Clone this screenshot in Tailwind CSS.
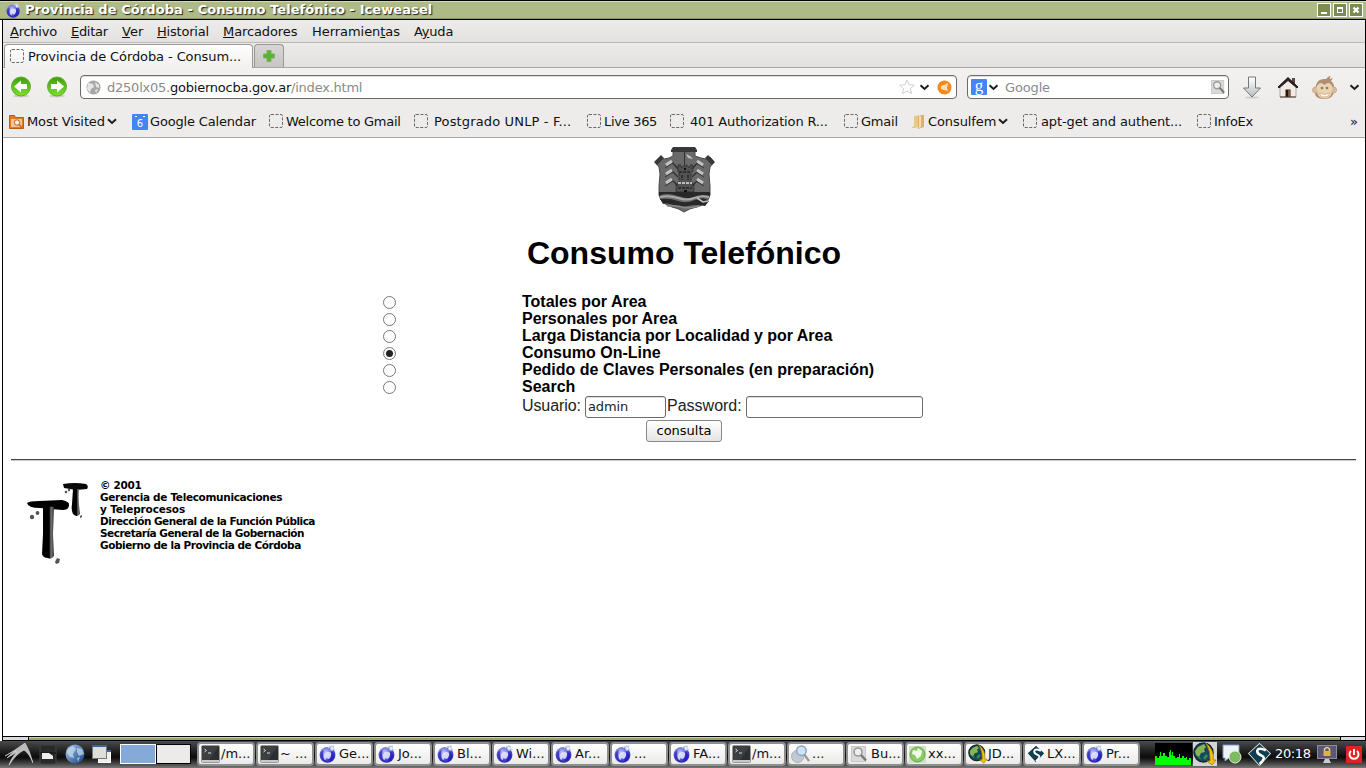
<!DOCTYPE html>
<html lang="es">
<head>
<meta charset="utf-8">
<title>Provincia de Córdoba - Consumo Telefónico</title>
<script src="https://cdn.jsdelivr.net/npm/@tailwindcss/browser@4"></script>
</head>
<body class="w-[1366px] h-[768px] overflow-hidden bg-white text-[#111] font-['DejaVu_Sans',sans-serif] text-[13px] leading-4">
<svg class="absolute h-0 w-0">
  <defs>
    <radialGradient id="gBlue" cx=".4" cy=".35" r=".65"><stop offset="0" stop-color="#c4c8fa"/><stop offset=".5" stop-color="#6e72dc"/><stop offset="1" stop-color="#2a28b4"/></radialGradient>
    <linearGradient id="gGreen" x1="0" x2="0" y1="0" y2="1"><stop offset="0" stop-color="#3f9d0b"/><stop offset="1" stop-color="#7ee02e"/></linearGradient>
    <linearGradient id="gSky" x1="0" x2="1" y1="0" y2="1"><stop offset="0" stop-color="#a9cdf0"/><stop offset="1" stop-color="#123f80"/></linearGradient>
    <linearGradient id="gDown" x1="0" x2="0" y1="0" y2="1"><stop offset="0" stop-color="#fff"/><stop offset="1" stop-color="#b4c0c4"/></linearGradient>
    <linearGradient id="gBrush" x1="0" x2="1" y1="0" y2="0"><stop offset="0" stop-color="#000"/><stop offset=".6" stop-color="#000"/><stop offset=".75" stop-color="#777"/><stop offset="1" stop-color="#333"/></linearGradient>
  </defs>
  <symbol id="weasel" viewBox="0 0 18 18">
    <circle cx="8.500" cy="9.800" r="7.900" fill="url(#gBlue)"/>
    <path d="M1.500 12q-1-5 3-7-1 4 0 9 2 2 5 3-6 0-8-5z" fill="#2722b8" opacity=".7"/>
    <path d="M4.500 11q1-4 5-4 3 0 3 3l-1 2q-1 2-2 2l-2-1-1 2q-2-1-2-4z" fill="#ececff" opacity=".8"/><path d="M12 6q4 2 3 7l-3 3q-2-1-3-1 4-2 3-9z" fill="#2018c0" opacity=".75"/>
    <path d="M9 3q2-2.200 6-1.500M12 5q3-1 4 0" stroke="#c5d0e6" stroke-width="1.500" fill="none"/><circle cx="13" cy="3.400" r="1.700" fill="#eef4ff" stroke="#b0bdd8" stroke-width=".6"/>
  </symbol>
  <symbol id="term" viewBox="0 0 20 18">
    <rect x=".5" y=".5" width="18" height="17" rx="1" fill="#c9c9c9" stroke="#999"/><rect x="1" y="1" width="17" height="14" fill="#2c2f30"/><path d="M1 1h17L8 15H1z" fill="#4a4d4e" opacity=".6"/>
    <path d="M3.500 4l2 1.500-2 1.500M7 8h3" stroke="#ddd" fill="none"/>
  </symbol>
  <symbol id="chev" viewBox="0 0 10 7"><path d="M1 1.300l4 3.700 4-3.700" stroke="#1c1c1c" stroke-width="2" fill="none"/></symbol>
  <symbol id="blank" viewBox="0 0 15 15"><rect x=".5" y=".5" width="13" height="13" rx="1.500" fill="none" stroke="#6a6a6a" stroke-dasharray="3 1.500"/></symbol>
  <symbol id="earth" viewBox="0 0 24 24">
    <circle cx="10.500" cy="10.500" r="9.500" fill="#164760"/>
    <path d="M5 5l6-3 2 3-2 2 1 3-4 1-2 4-3-2-1-4z" fill="#8ab552"/><path d="M3 13l4 2 1 3M13 12l2 2-3 4-2-2z" fill="#3c8b41"/><circle cx="10.500" cy="10.500" r="9.500" fill="none" stroke="#102a2c" stroke-width="1.500"/>
    <path d="M13 1q9 8 7 17h3l-4 5-5-4h3q1-9-4-18z" fill="#f6c313" stroke="#a37809" stroke-width=".8"/>
  </symbol>
  <symbol id="lx" viewBox="0 0 22 22">
    <path d="M11 1l10 9-10 11L1 10z" fill="#123d4e"/><path d="M17 7q-7-3-8 0t4 5-2 8" stroke="#fff" stroke-width="2.400" fill="none"/>
  </symbol>
  <symbol id="mag" viewBox="0 0 16 16">
    <rect x=".5" y=".5" width="14" height="15" fill="#dadada" stroke="#c8c8c8"/><circle cx="7" cy="6" r="4" fill="#eee" stroke="#9a9a9a" stroke-width="1.600"/><path d="M10 9l5 5.500" stroke="#777" stroke-width="2.400"/>
  </symbol>
</svg>

<div class="flex h-[741px] flex-col">
 <div class="flex h-[737px] flex-col">
  <!-- title bar -->
  <header class="flex h-5 w-full shrink-0 items-center border-y border-black bg-[#afbb86] pl-[6px] pr-[1px] shadow-[inset_0_1px_#d3dcae,inset_0_-1px_#8b9665]">
    <svg class="h-[15px] w-[15px]"><use href="#weasel"/></svg>
    <h1 class="ml-[4px] flex-1 whitespace-nowrap text-[13px] font-bold leading-[18px] tracking-[0.08px] text-white [text-shadow:1px_1px_1px_#222]">Provincia de Córdoba - Consumo Telefónico - Iceweasel</h1>
    <div class="flex gap-[2px] pr-[2px]">
      <svg class="h-[14px] w-[14px]" viewBox="0 0 14 14"><rect x=".5" y=".5" width="13" height="13" fill="#7c8a54" stroke="#fff"/><path d="M4 9h6v2H4z" fill="#fff"/></svg>
      <svg class="h-[14px] w-[14px]" viewBox="0 0 14 14"><rect x=".5" y=".5" width="13" height="13" fill="#7c8a54" stroke="#fff"/><path d="M4 4h6v6H4zM5 6v3h4V6z" fill="#fff" fill-rule="evenodd"/></svg>
      <svg class="h-[14px] w-[14px]" viewBox="0 0 14 14"><rect x=".5" y=".5" width="13" height="13" fill="#7c8a54" stroke="#fff"/><path d="M4.500 4.500l5 5M9.500 4.500l-5 5" stroke="#fff" stroke-width="2.200"/></svg>
    </div>
  </header>

  <div class="ml-[2px] flex flex-1 flex-col border-l border-r border-b border-black">
    <nav class="flex h-[23px] shrink-0 items-center border-b border-[#bcbab8] bg-linear-to-b from-[#edeceb] to-[#e3e2e0] pl-[7px] pt-[2px] whitespace-nowrap">
      <span class="w-[61px] tracking-[-0.25px]"><u>A</u>rchivo</span><span class="w-[51px] tracking-[-0.3px]"><u>E</u>ditar</span><span class="w-[35px]"><u>V</u>er</span><span class="w-[66px] tracking-[-0.2px]"><u>H</u>istorial</span><span class="w-[89px] tracking-[-0.1px]"><u>M</u>arcadores</span><span class="w-[102px] tracking-[-0.05px]">Herramien<u>t</u>as</span><span class="tracking-[-0.2px]">A<u>y</u>uda</span>
    </nav>
    <div class="flex h-[25px] shrink-0 items-end border-b border-[#aaa8a6] bg-linear-to-b from-[#ecebea] to-[#e2e1df] pl-[1px]">
      <div class="-mb-px flex h-[24px] w-[249px] items-center rounded-t-[4px] border border-b-0 border-[#9a9896] bg-linear-to-b from-white to-[#f1f0ef] pl-[5px]">
        <svg class="h-[15px] w-[15px]"><use href="#blank"/></svg><span class="ml-[3px] whitespace-nowrap tracking-[-0.1px]">Provincia de Córdoba - Consum...</span>
      </div>
      <div class="ml-[1px] flex h-[23px] w-[30px] items-center justify-center rounded-t-[4px] border border-b-0 border-[#9a9896] bg-linear-to-b from-[#d8d7d5] to-[#c6c5c3]">
        <svg class="h-[12px] w-[12px]" viewBox="0 0 12 12"><path d="M4 .5h4V4h3.500v4H8v3.500H4V8H.5V4H4z" fill="#55b52b" stroke="#7fae69"/></svg>
      </div>
    </div>

    <div class="flex h-[38px] shrink-0 items-center bg-linear-to-b from-[#f2f1f0] to-[#edecea] pl-[7px]">
      <svg class="h-[22px] w-[22px]" viewBox="0 0 22 22"><ellipse cx="11" cy="20" rx="8" ry="1.500" fill="#ccc"/><circle cx="11" cy="10.500" r="9.500" fill="url(#gGreen)" stroke="#5faf2b"/><path d="M4 10.500L11 4.500V8h6v5h-6v3.500z" fill="#fff"/></svg>
      <svg class="ml-[14px] h-[22px] w-[22px]" viewBox="0 0 22 22"><ellipse cx="11" cy="20" rx="8" ry="1.500" fill="#ccc"/><circle cx="11" cy="10.500" r="9.500" fill="url(#gGreen)" stroke="#5faf2b"/><path d="M18 10.500L11 4.500V8H5v5h6v3.500z" fill="#fff"/></svg>
      <div class="ml-[12px] flex h-[24px] w-[877px] items-center rounded-[4px] border border-[#6d6b69] bg-white pl-[5px] pr-[4px] shadow-[inset_0_1px_#ddd]">
        <svg class="h-[15px] w-[15px]" viewBox="0 0 15 15"><circle cx="7.500" cy="7.500" r="7" fill="#a7a7a7"/><path d="M2 3l5 1 1 3-3 2-1 4-3-4zM9 2l4 3v3l-3-1zM9 10l3-1-2 4z" fill="#e6e6e6"/></svg>
        <span class="ml-[6px] flex-1 whitespace-nowrap pt-px tracking-[-0.23px] text-[#8a8a8a]">d250lx05.<span class="text-[#111]">gobiernocba.gov.ar</span>/index.html</span>
        <svg class="h-4 w-4" viewBox="0 0 16 16"><path d="M8 1l2.100 4.800 5.200.4-4 3.400 1.300 5L8 12l-4.600 2.700 1.300-5-4-3.500 5.200-.4z" fill="#fff" stroke="#d0d0d0"/></svg>
        <svg class="ml-[4px] h-[7px] w-[11px]"><use href="#chev"/></svg>
        <svg class="ml-[7px] h-[15px] w-[15px]" viewBox="0 0 15 15"><circle cx="7.500" cy="7.500" r="7" fill="#f58a1c"/><path d="M4 6l3-1 4-2-1 5 1 3-4-1-3-1z" fill="#ffe0b8"/></svg>
      </div>
      <div class="ml-[10px] flex h-[24px] w-[262px] items-center rounded-[4px] border border-[#6d6b69] bg-white px-[3px] shadow-[inset_0_1px_#ddd]">
        <span class="flex h-4 w-4 items-center justify-center rounded-[1px] bg-[#4285f4] pb-[3px] font-['Liberation_Serif',serif] text-[17px] leading-4 text-white">g</span>
        <svg class="ml-[1px] h-[7px] w-[11px]"><use href="#chev"/></svg>
        <span class="ml-[6px] flex-1 pt-px tracking-[-0.15px] text-[#8a8a8a]">Google</span>
        <svg class="h-[16px] w-[14px]" viewBox="0 0 16 16"><use href="#mag"/></svg>
      </div>
      <svg class="ml-[13px] h-[23px] w-[20px]" viewBox="0 0 20 23"><ellipse cx="10" cy="21.500" rx="7" ry="1" fill="#ccc"/><path d="M6.500 1h7v11h5L10 21 1.500 12h5z" fill="url(#gDown)" stroke="#777"/></svg>
      <svg class="ml-[16px] h-[22px] w-[20px]" viewBox="0 0 20 22"><path d="M14 2h3v6h-3z" fill="#5a4a48"/><path d="M2 10l8-7 8 7v11H2z" fill="#f1ebe5" stroke="#b5a9a2"/><path d="M0 11L10 1.500 20 11l-1 1L10 4.500 1 12z" fill="#2b1f1e" stroke="#2b1f1e"/><path d="M7.500 13.500h5V21h-5z" fill="#201614"/><path d="M10 14h2v7h-2z" fill="#84552f"/><path d="M2 21h16" stroke="#493a35"/></svg>
      <svg class="ml-[14px] h-[25px] w-[25px]" viewBox="0 0 25 25"><path d="M4 10Q6 3 14 4q2-3 5-3-2 2-1 3l3-1-2 3q4 3 3 9 0 9-10 9T3 16z" fill="#b08e72"/><circle cx="3.500" cy="15" r="3" fill="#dabb98" stroke="#c9ab90"/><circle cx="21.500" cy="15" r="3" fill="#dabb98" stroke="#c9ab90"/><path d="M12.500 10q4-4 7 0 2 3 0 6 1 7-7 7.500-8-.5-7-7.500-2-3 0-6 3-4 7 0z" fill="#ecd3ad"/><circle cx="10" cy="13" r="1.300" fill="#6d8085"/><circle cx="15" cy="13" r="1.300" fill="#6d8085"/><path d="M7 18q5.500 3 11 0-1 4-5.500 4T7 18z" fill="#fff" stroke="#c9a587" stroke-width=".7"/></svg>
      <svg class="ml-[12px] h-[7px] w-[11px]"><use href="#chev"/></svg>
    </div>

    <div class="flex h-[32px] shrink-0 items-center border-b border-[#aaa8a6] bg-[#edecea] pl-[6px] whitespace-nowrap">
      <div class="flex w-[123px] items-center"><svg class="h-[15px] w-[15px]" viewBox="0 0 15 15"><path d="M.5 1.500h5l1 2h8v11H.5z" fill="#e07b28" stroke="#b85c16"/><path d="M2 5h11v8H2z" fill="#f5c397"/><circle cx="8" cy="8.500" r="2.700" fill="#fff0df" stroke="#c2651a"/><path d="M10 10.500l3 3" stroke="#c2651a" stroke-width="1.500"/></svg><span class="ml-[3px] tracking-[-0.1px]">Most Visited</span><svg class="ml-[2px] h-[7px] w-[10px]"><use href="#chev"/></svg></div>
      <div class="flex w-[137px] items-center"><svg class="h-4 w-4" viewBox="0 0 16 16"><rect width="16" height="16" rx="1" fill="#4285f4"/><path d="M3 2h2v1H3zM11 2h2v1h-2z" fill="#fff"/><text x="8" y="13" font-size="10" text-anchor="middle" fill="#fff" font-family="DejaVu Sans">6</text></svg><span class="ml-[2px] tracking-[-0.17px]">Google Calendar</span></div>
      <div class="flex w-[145px] items-center"><svg class="h-[15px] w-[15px]"><use href="#blank"/></svg><span class="ml-[2px] tracking-[-0.25px]">Welcome to Gmail</span></div>
      <div class="flex w-[173px] items-center"><svg class="h-[15px] w-[15px]"><use href="#blank"/></svg><span class="ml-[5px] tracking-[0.15px]">Postgrado UNLP - F...</span></div>
      <div class="flex w-[83px] items-center"><svg class="h-[15px] w-[15px]"><use href="#blank"/></svg><span class="ml-[2px] tracking-[-0.3px]">Live 365</span></div>
      <div class="flex w-[174px] items-center"><svg class="h-[15px] w-[15px]"><use href="#blank"/></svg><span class="ml-[5px] tracking-[-0.15px]">401 Authorization R...</span></div>
      <div class="flex w-[67px] items-center"><svg class="h-[15px] w-[15px]"><use href="#blank"/></svg><span class="ml-[2px] tracking-[-0.2px]">Gmail</span></div>
      <div class="flex w-[112px] items-center"><svg class="h-[15px] w-[15px]" viewBox="0 0 15 15"><path d="M0 14l3-2V8l2-1v7z" fill="#c7c7c7"/><path d="M3 2l5-1v12l-5 1z" fill="#e8c88d"/><path d="M7 3l3-2h3v12l-6 2z" fill="#dcb26a"/><path d="M8 3l2-1v11l-2 1z" fill="#f6deb0"/></svg><span class="ml-[2px] tracking-[-0.1px]">Consulfem</span><svg class="ml-[2px] h-[7px] w-[10px]"><use href="#chev"/></svg></div>
      <div class="flex w-[174px] items-center"><svg class="h-[15px] w-[15px]"><use href="#blank"/></svg><span class="ml-[3px] tracking-[-0.1px]">apt-get and authent...</span></div>
      <div class="flex w-[153px] items-center"><svg class="h-[15px] w-[15px]"><use href="#blank"/></svg><span class="ml-[2px] tracking-[-0.25px]">InfoEx</span></div>
      <span>»</span>
    </div>

    <!-- page -->
    <main class="flex flex-1 flex-col bg-white px-2 pt-[9px] font-['Liberation_Sans',sans-serif] text-[16px] text-black">
      <svg class="ml-[643px] h-[66px] w-[62px] shrink-0" viewBox="0 0 62 66">
        <path d="M19 4h22v5l6 2 5 1 4-2 4 5-4 5-1 7 1 12v9q-2 9-13 12-7 1-13 5-6-4-12-5Q7 57 5 48v-9l1-12-1-7-4-5 5-5 4 2 5-1 4-2z" fill="#6a6a6a" stroke="#4a4a4a"/>
        <path d="M17 3l2-3h22l2 3v2H17zM0 15l7-7 3 3-7 7zM61 15l-7-7-3 3 7 7z" fill="#383838"/>
        <path d="M24 18h3v2h3v-2h3v2h3v-2h3v6l-2 2v9l3 2v8H22v-8l3-2v-9l-1-2z" fill="#525252" stroke="#2e2e2e" stroke-dasharray="3 1"/>
        <path d="M30.500 5v13" stroke="#333"/><path d="M28 28v5M34 28v5M25 25h12M24 41h14" stroke="#262626" stroke-width="1.500" stroke-dasharray="3 1"/><path d="M30 21h2v2h-2zM30 43h3v3h-3z" fill="#111"/>
        <path d="M24 36h14" stroke="#bbb" stroke-width="2" stroke-dasharray="3 1"/>
        <path d="M32 7l4 2 3 3-5-1z" fill="#c2c2c2"/>
        <path d="M18 15l6 7M18 24l6 6M18 33l6 6M44 15l-6 7M44 24l-6 6M44 33l-6 6" stroke="#2d2d2d" stroke-width="1.300"/>
        <path d="M12 18l6-4M12 27l6-4M12 36l6-4M43 14l6 4M43 23l6 4M43 32l6 4" stroke="#c2c2c2" stroke-width="3.200"/>
        <path d="M11 21l8-5M11 30l8-5M11 39l8-5M42 16l8 5M42 25l8 5M42 34l8 5" stroke="#383838" stroke-width="1"/>
        <path d="M5 45h51v4q-8-2-14 1t-18-1-19 0zM6 52q10-1 18 2t17-1 14 1l-4 5q-9-2-17 0t-15-1-10-1z" fill="#282828"/>
        <path d="M6 50q9-2 18 1t16 0 15-1" stroke="#a8a8a8" stroke-width="2" fill="none"/><path d="M13 59q9-1 15 1t18-1" stroke="#8a8a8a" stroke-width="1.500" fill="none"/><path d="M43 51l6 4 5-1" stroke="#c2c2c2" stroke-width="1.600" fill="none"/>
      </svg>
      <h2 class="mt-[21px] h-[38px] text-center text-[32px] font-bold leading-[38px]">Consumo Telefónico</h2>
      <div class="mt-[21px] flex h-[102px] pl-[371px]">
        <div class="flex w-[140px] flex-col pt-[3px] pl-[0.5px] *:mb-[4px] *:h-[13px] *:w-[13px] *:shrink-0 *:rounded-full *:border *:border-[#777] *:bg-white">
          <i></i><i></i><i></i><i class="flex items-center justify-center"><b class="h-[7px] w-[7px] rounded-full bg-[#222]"></b></i><i></i><i></i>
        </div>
        <div class="whitespace-nowrap text-[16px] font-bold leading-[17px] [&_p]:w-max">
          <p>Totales por Area</p><p>Personales por Area</p><p class="tracking-[-0.03px]">Larga Distancia por Localidad y por Area</p><p>Consumo On-Line</p><p>Pedido de Claves Personales (en preparación)</p><p>Search</p>
        </div>
      </div>
      <div class="flex h-[24px] items-center whitespace-nowrap pl-[511px] text-[#222]">
        <span class="-mt-[3px] w-[63px] tracking-[-0.1px]">Usuario:</span>
        <span class="flex h-[22px] w-[81px] items-center rounded-[3px] border border-[#6d6b69] pl-[2px] font-['DejaVu_Sans',sans-serif] text-[13px] tracking-[-0.1px] shadow-[inset_0_1px_#ddd]">admin</span>
        <span class="-mt-[3px] ml-[1px] w-[79px]">Password:</span>
        <span class="h-[22px] w-[177px] rounded-[3px] border border-[#6d6b69] shadow-[inset_0_1px_#ddd]"></span>
      </div>
      <button class="ml-[635px] mt-px flex h-[22px] w-[76px] shrink-0 items-center justify-center rounded-[3px] border border-[#8a8886] bg-linear-to-b from-white to-[#e6e5e3] pb-px font-['DejaVu_Sans',sans-serif] text-[13px]">consulta</button>
      <div class="mt-[17px] mr-px h-[2px] shrink-0 border-t border-[#444] bg-[#ccc]"></div>
      <div class="flex pt-[18px] pl-[16px]">
        <svg class="mt-[4px] h-[83px] w-[62px]" viewBox="0 0 62 83">
          <path d="M0 20q2-2 12-2l23-1q8 2 7 5 0 5-6 5-13-1-23-2-12 0-13-5z" fill="#000"/><path d="M16 24q5-1 11 0l-1 27 1 22q-3 4-6 2-5 0-6-4l1-20z" fill="url(#gBrush)"/>
          <path d="M36 1q12-2 23 0 3 2 1 5l-11 1-12-2z" fill="#090909"/><path d="M46 6h6q-1 10 1 25-3 4-7 0-2-4-1-10z" fill="url(#gBrush)"/>
          <g fill="#555"><circle cx="5" cy="34" r="2.200"/><circle cx="10.500" cy="30" r="1.900"/><circle cx="39" cy="9" r="1.300"/><circle cx="42" cy="7" r="1.200"/><path d="M28 79l2-4 3 1-1 4-3 1zM53 33l2-1v2l-2 1z"/></g>
        </svg>
        <p class="ml-[11px] whitespace-nowrap font-['DejaVu_Sans',sans-serif] text-[10.500px] font-bold leading-[12px] tracking-[-0.5px]"><span class="tracking-[-0.3px]">© 2001</span><br><span class="tracking-[-0.33px]">Gerencia de Telecomunicaciones</span><br><span class="tracking-[-0.15px]">y Teleprocesos</span><br>Dirección General de la Función Pública<br>Secretaría General de la Gobernación<br><span class="tracking-[-0.45px]">Gobierno de la Provincia de Córdoba</span></p>
      </div>
    </main>
  </div>
 </div>
  <!-- resize handle -->
  <div class="ml-[2px] flex h-[4px] shrink-0 border-x border-b border-black"><div class="w-[26px] border-r border-black bg-[#d8dadd]"></div><div class="flex-1 border-t border-[#c9d59c] bg-[#97a568]"></div><div class="w-[25px] border-l border-black bg-[#d8dadd]"></div></div>
</div>

<!-- taskbar -->
<footer class="flex h-[27px] items-center overflow-hidden whitespace-nowrap bg-linear-to-b from-[#4b4b4b] via-[#0b0b0b] via-60% to-[#777] pb-px pl-[3px]">
  <svg class="h-[24px] w-[30px]" viewBox="0 0 30 24"><path d="M2 14Q11 9 22 1q5 8 8 20-4-10-9-13Q13 12 6 23q2-7 8-13-6 4-10 6 3-4 9-7-6 2-11 5z" fill="#bbb" stroke="#eee" stroke-width=".5"/></svg>
  <svg class="ml-[6px] h-[21px] w-[18px]" viewBox="0 0 18 21"><rect x="1" y="1" width="16" height="19" rx="2" fill="#292929" stroke="#454545"/><path d="M1 9h16" stroke="#111"/><path d="M3 9h7l4 3v3H3z" fill="#eee"/></svg>
  <svg class="ml-[8px] h-[20px] w-[20px]" viewBox="0 0 20 20"><circle cx="10" cy="10" r="9.500" fill="url(#gSky)"/><path d="M3 5l5-3 3 3-3 5 1 4-4-1-3-4zM12 4l5 1 2 5-5 2-2-4zM12 14l3-1-2 5z" fill="#d2e5f5" opacity=".65"/></svg>
  <svg class="ml-[7px] h-[20px] w-[20px]" viewBox="0 0 20 20"><rect x="6.500" y="6.500" width="12" height="12" fill="#eee" stroke="#fff"/><path d="M6 6h13v2H6z" fill="#3465a4"/><rect x=".5" y="2.500" width="14" height="12" fill="#deded9" stroke="#777"/><path d="M0 1h15v2H0z" fill="#3465a4"/></svg>
  <div class="ml-[8px] h-[20px] w-[36px] border border-white bg-[#86aad8]"></div><div class="h-[20px] w-[35px] border border-black bg-[#edebea]"></div>
  <div class="ml-[6px] flex text-[13px] *:mr-[1px] *:flex *:h-[24px] *:w-[58px] *:items-center *:overflow-hidden *:rounded-[4px] *:border-2 *:border-[#8e8e8e] *:bg-linear-to-b *:from-white *:to-[#ebeae8] *:pl-[2px]">
    <div><svg class="h-[18px] w-[20px] shrink-0"><use href="#term"/></svg>/m...</div>
    <div><svg class="h-[18px] w-[20px] shrink-0"><use href="#term"/></svg>~ ...</div>
    <div><svg class="mr-[2px] h-[18px] w-[18px] shrink-0"><use href="#weasel"/></svg>Ge...</div>
    <div><svg class="mr-[2px] h-[18px] w-[18px] shrink-0"><use href="#weasel"/></svg>Jo...</div>
    <div><svg class="mr-[2px] h-[18px] w-[18px] shrink-0"><use href="#weasel"/></svg>Bl...</div>
    <div><svg class="mr-[2px] h-[18px] w-[18px] shrink-0"><use href="#weasel"/></svg>Wi...</div>
    <div><svg class="mr-[2px] h-[18px] w-[18px] shrink-0"><use href="#weasel"/></svg>Ar...</div>
    <div><svg class="mr-[2px] h-[18px] w-[18px] shrink-0"><use href="#weasel"/></svg>...</div>
    <div><svg class="mr-[2px] h-[18px] w-[18px] shrink-0"><use href="#weasel"/></svg>FA...</div>
    <div><svg class="h-[18px] w-[20px] shrink-0"><use href="#term"/></svg>/m...</div>
    <div><svg class="mr-[2px] h-[19px] w-[19px] shrink-0" viewBox="0 0 20 20"><circle cx="7" cy="12" r="6.500" fill="#c3c8d0" stroke="#a9b0ba"/><circle cx="11" cy="6" r="5" fill="#cfe2f6" stroke="#8ba2bd" stroke-width="1.500"/><path d="M14 10l5 7" stroke="#999" stroke-width="2.500"/></svg>...</div>
    <div><svg class="mr-[4px] ml-[1px] h-[18px] w-[16px] shrink-0"><use href="#mag"/></svg>Bu...</div>
    <div><svg class="mr-[2px] h-[17px] w-[17px] shrink-0" viewBox="0 0 17 17"><path d="M0 0h17v17H0z" fill="#cfe0cd"/><circle cx="8.500" cy="8.500" r="7.500" fill="#8dca63"/><path d="M4 4l4 1 1-3 4 3-1 5-4 3-2-4-3-1z" fill="#f1faea"/><circle cx="8.500" cy="8.500" r="7.500" fill="none" stroke="#65a946"/></svg>xx...</div>
    <div><svg class="h-[20px] w-[20px] shrink-0" viewBox="0 0 24 24"><use href="#earth"/></svg>JD...</div>
    <div><svg class="mr-[2px] h-[18px] w-[18px] shrink-0"><use href="#lx"/></svg>LX...</div>
    <div><svg class="mr-[2px] h-[18px] w-[18px] shrink-0"><use href="#weasel"/></svg>Pr...</div>
  </div>
  <div class="ml-[14px] flex shrink-0 items-center">
    <svg class="h-[22px] w-[37px] bg-black" viewBox="0 0 37 22"><path d="M0 22v-9h2v2h2v-2h1v-4h1v4h2v-3h2v3h2v1h2v-5h1v-2h1v5h1v-3h1v4h2v2h2v-1h2v-3h1v4h2v-2h2v2h2v-1h1v3h2v-2h2v9z" fill="#0f0"/></svg>
    <svg class="ml-[1px] h-[24px] w-[24px] bg-[#d4d4d4]"><use href="#earth"/></svg>
    <svg class="ml-[5px] h-[20px] w-[20px]" viewBox="0 0 20 20"><path d="M1 1h16v13H7l-4 3v-3H1z" fill="#eef3f7" stroke="#7a9cbd"/><circle cx="13" cy="13" r="6" fill="#7dbb63" stroke="#def0d4"/></svg>
    <svg class="ml-[6px] h-[23px] w-[23px]" viewBox="0 0 22 22"><path d="M11 0l11 10-11 12L0 10z" fill="#fff"/><use href="#lx"/></svg>
    <span class="ml-[4px] w-[42px] tracking-[-0.35px] text-white">20:18</span>
    <svg class="h-[20px] w-[20px]" viewBox="0 0 20 20"><rect x=".5" y="1.500" width="19" height="13" fill="#5c5775" stroke="#8e8aa0"/><path d="M8 15h4l2 4H6z" fill="#ccc"/><path d="M7.500 7V5q2.500-3 5 0v2" stroke="#e6d28d" stroke-width="1.500" fill="none"/><rect x="6.500" y="7" width="7" height="5" fill="#e1b342"/></svg>
    <svg class="ml-[9px] h-[17px] w-[16px]" viewBox="0 0 16 17"><rect width="16" height="17" fill="#df2222"/><path d="M5 5a4.500 4.500 0 1 0 6 0M8 3v6" stroke="#fff" stroke-width="2" fill="none"/></svg>
  </div>
</footer>
</body>
</html>
